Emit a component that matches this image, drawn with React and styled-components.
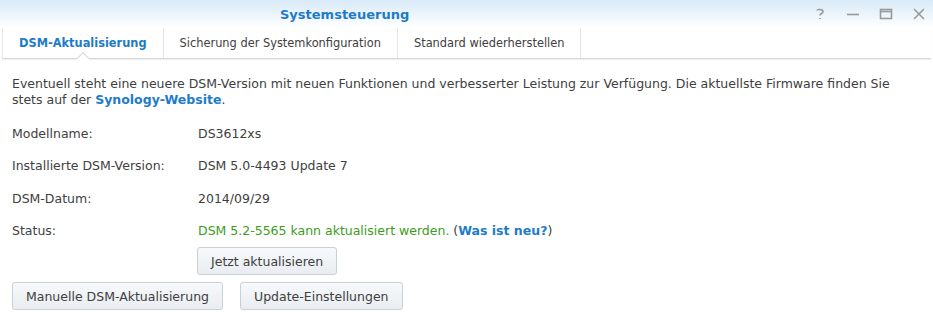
import styled, { createGlobalStyle } from 'styled-components';

const Global = createGlobalStyle`
  html, body { margin: 0; padding: 0; background: #fff; }
  body {
    font-family: "DejaVu Sans", Verdana, sans-serif;
    font-size: 12.5px;
    color: #404040;
  }
`;

const Window = styled.div`
  width: 933px;
  height: 335px;
  background: #fff;
  overflow: hidden;
`;

const TitleBar = styled.div`
  height: 28px;
  display: flex;
  align-items: center;
  background: linear-gradient(#d8eaf8, #ffffff);
`;

const Title = styled.div`
  flex: 1;
  padding-left: 280px;
  padding-top: 1px;
  font-weight: bold;
  font-size: 13px;
  color: #1d7bc9;
`;

const Controls = styled.div`
  display: flex;
  gap: 17px;
  padding-right: 6px;
  align-items: center;
`;

const Ctrl = styled.svg`
  width: 16px;
  height: 16px;
  stroke: #9a9a9a;
  fill: none;
  stroke-width: 1.6;
`;

const Tabs = styled.div`
  display: flex;
  height: 30px;
  align-items: center;
  margin: 0 2px;
  border-left: 1px solid #e8e8e8;
  border-bottom: 1px solid #d6d6d6;
  box-shadow: 0 1px 1px rgba(0, 0, 0, 0.06);
`;

const Tab = styled.div`
  position: relative;
  height: 100%;
  display: flex;
  align-items: center;
  padding: 0 16px;
  border-right: 1px solid #e3e3e3;
  font-size: 11.4px;
  font-weight: ${p => (p.$active ? 'bold' : 'normal')};
  color: ${p => (p.$active ? '#1d7bc9' : '#404040')};
`;

const Notch = styled.span`
  position: absolute;
  left: 50%;
  bottom: -1px;
  width: 9px;
  height: 9px;
  margin-left: -5px;
  transform: translateY(5px) rotate(45deg);
  background: #fff;
  border-left: 1px solid #d6d6d6;
  border-top: 1px solid #d6d6d6;
`;

const Content = styled.div`
  padding: 17px 12px 0 12px;
`;

const Intro = styled.p`
  margin: 0 0 9px 0;
  line-height: 16px;
  max-width: 885px;
`;

const Link = styled.a`
  color: #1d7bc9;
  font-weight: bold;
  text-decoration: none;
`;

const Row = styled.div`
  display: grid;
  grid-template-columns: 186px 1fr;
  height: 32.5px;
  align-items: center;
`;

const Status = styled.span`
  color: #3d9c1b;
`;

const Button = styled.button`
  font-family: inherit;
  font-size: 12.5px;
  color: #404040;
  height: 28px;
  padding: 0 13px;
  border: 1px solid #c8d0d8;
  border-radius: 3px;
  background: linear-gradient(#f7f9fb, #e9edf1);
`;

const ButtonRow = styled.div`
  display: flex;
  gap: 17px;
  margin-top: ${p => p.$top || 0}px;
  padding-left: ${p => p.$indent || 0}px;
`;

export default function App() {
  return (
    <Window>
      <Global />
      <TitleBar>
        <Title>Systemsteuerung</Title>
        <Controls>
          <Ctrl viewBox="0 0 16 16"><path d="M5 4.5 C5 3 11 3 11 5.5 C11 7.5 8 7.5 8 9.5 M8 12 v1" /></Ctrl>
          <Ctrl viewBox="0 0 16 16"><path d="M2 8.5 H14" /></Ctrl>
          <Ctrl viewBox="0 0 16 16"><rect x="2.5" y="3.5" width="11" height="9" /><path d="M2.5 5.5 H13.5" /></Ctrl>
          <Ctrl viewBox="0 0 16 16"><path d="M3 3 L13 13 M13 3 L3 13" /></Ctrl>
        </Controls>
      </TitleBar>
      <Tabs>
        <Tab $active>DSM-Aktualisierung<Notch /></Tab>
        <Tab>Sicherung der Systemkonfiguration</Tab>
        <Tab>Standard wiederherstellen</Tab>
      </Tabs>
      <Content>
        <Intro>
          Eventuell steht eine neuere DSM-Version mit neuen Funktionen und verbesserter Leistung zur Verfügung. Die aktuellste Firmware finden Sie stets auf der <Link>Synology-Website</Link>.
        </Intro>
        <Row><span>Modellname:</span><span>DS3612xs</span></Row>
        <Row><span>Installierte DSM-Version:</span><span>DSM 5.0-4493 Update 7</span></Row>
        <Row><span>DSM-Datum:</span><span>2014/09/29</span></Row>
        <Row><span>Status:</span><span><Status>DSM 5.2-5565 kann aktualisiert werden.</Status> (<Link>Was ist neu?</Link>)</span></Row>
        <ButtonRow $indent={185} $top={0}><Button>Jetzt aktualisieren</Button></ButtonRow>
        <ButtonRow $top={7}>
          <Button>Manuelle DSM-Aktualisierung</Button>
          <Button>Update-Einstellungen</Button>
        </ButtonRow>
      </Content>
    </Window>
  );
}
